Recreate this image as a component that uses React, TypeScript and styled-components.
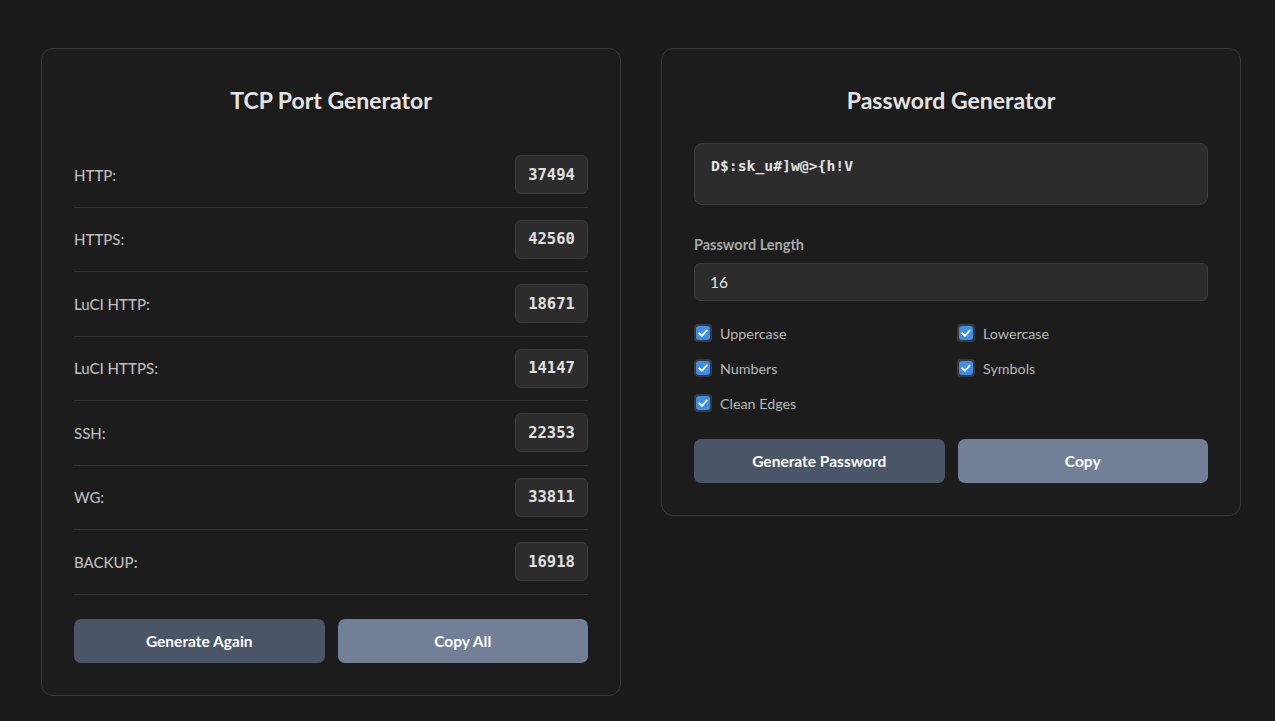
import React from "react";
import styled, { createGlobalStyle } from "styled-components";

const Global = createGlobalStyle`
  html, body { margin: 0; padding: 0; background: #1b1b1b; }
  body { font-family: "Lato", "Noto Sans", sans-serif; color: #ddd; }
  * { box-sizing: border-box; }
`;

const Page = styled.div`
  display: flex;
  align-items: flex-start;
  gap: 40px;
  padding: 48px 0 48px 41px;
`;

const Card = styled.section`
  flex: 0 0 580px;
  width: 580px;
  background: #1c1c1c;
  border: 1px solid #3a3a3a;
  border-radius: 12px;
  padding: 32px;
`;

const Title = styled.h2`
  margin: 0 0 24px;
  text-align: center;
  font-size: 23px;
  line-height: 38px;
  font-weight: 700;
  color: #e4e4e4;
`;

const PortRow = styled.div`
  display: flex;
  align-items: center;
  justify-content: space-between;
  padding: 12.25px 0;
  border-bottom: 1px solid #333;
`;

const PortLabel = styled.span`
  font-size: 15px;
  color: #bdbdbd;
  font-weight: 500;
`;

const PortValue = styled.span`
  display: inline-flex;
  align-items: center;
  justify-content: center;
  height: 39px;
  width: 73px;
  background: #2c2c2c;
  border: 1px solid #3c3c3c;
  border-radius: 6px;
  font-family: "DejaVu Sans Mono", "Liberation Mono", monospace;
  font-weight: 700;
  font-size: 15.5px;
  color: #e0e0e0;
`;

const ButtonRow = styled.div<{ $top: number }>`
  display: grid;
  grid-template-columns: 1fr 1fr;
  gap: 13px;
  margin-top: ${(p) => p.$top}px;
`;

const Button = styled.button<{ $light?: boolean }>`
  height: 44px;
  border: none;
  border-radius: 7px;
  background: ${(p) => (p.$light ? "#718096" : "#4a5568")};
  color: #ffffff;
  font-family: "Lato", "Noto Sans", sans-serif;
  font-size: 15.5px;
  font-weight: 700;
`;

const Output = styled.div`
  height: 62px;
  background: #2c2c2c;
  border: 1px solid #3c3c3c;
  border-radius: 8px;
  padding: 13px 16px;
  font-family: "DejaVu Sans Mono", "Liberation Mono", monospace;
  font-size: 14.75px;
  font-weight: 700;
  color: #e2e2e2;
  line-height: 18px;
`;

const FieldLabel = styled.label`
  display: block;
  margin: 30px 0 8px;
  font-size: 14.5px;
  line-height: 20px;
  font-weight: 700;
  color: #a8a8a8;
`;

const NumberInput = styled.div`
  height: 38px;
  display: flex;
  align-items: center;
  background: #2c2c2c;
  border: 1px solid #3c3c3c;
  border-radius: 6px;
  padding: 0 15px;
  font-size: 15.5px;
  color: #e6e6e6;
`;

const Options = styled.div`
  display: grid;
  grid-template-columns: 1fr 1fr;
  column-gap: 12px;
  row-gap: 15px;
  margin-top: 22px;
`;

const Option = styled.label`
  display: flex;
  align-items: center;
  gap: 8px;
  height: 20px;
  font-size: 14.3px;
  color: #b8b8b8;
`;

const Box = styled.span`
  width: 18px;
  height: 18px;
  border-radius: 4px;
  background: #3a3a3a;
  display: flex;
  align-items: center;
  justify-content: center;
`;

const Inner = styled.span`
  width: 14px;
  height: 14px;
  border-radius: 3px;
  background: #3b8eea;
  display: flex;
  align-items: center;
  justify-content: center;
`;

const Check = () => (
  <Box>
    <Inner>
      <svg width="12" height="12" viewBox="0 0 12 12">
        <path d="M2.2 6.3 L4.9 8.9 L9.8 3.4" fill="none" stroke="#fff" strokeWidth="1.9" strokeLinecap="round" strokeLinejoin="round" />
      </svg>
    </Inner>
  </Box>
);

const ports: [string, string][] = [
  ["HTTP:", "37494"],
  ["HTTPS:", "42560"],
  ["LuCI HTTP:", "18671"],
  ["LuCI HTTPS:", "14147"],
  ["SSH:", "22353"],
  ["WG:", "33811"],
  ["BACKUP:", "16918"],
];

const options = ["Uppercase", "Lowercase", "Numbers", "Symbols", "Clean Edges"];

export default function App() {
  return (
    <>
      <Global />
      <Page>
        <Card>
          <Title>TCP Port Generator</Title>
          {ports.map(([l, v]) => (
            <PortRow key={l}>
              <PortLabel>{l}</PortLabel>
              <PortValue>{v}</PortValue>
            </PortRow>
          ))}
          <ButtonRow $top={24}>
            <Button>Generate Again</Button>
            <Button $light>Copy All</Button>
          </ButtonRow>
        </Card>
        <Card>
          <Title>Password Generator</Title>
          <Output>{"D$:sk_u#]w@>{h!V"}</Output>
          <FieldLabel>Password Length</FieldLabel>
          <NumberInput>16</NumberInput>
          <Options>
            {options.map((o) => (
              <Option key={o}>
                <Check />
                {o}
              </Option>
            ))}
          </Options>
          <ButtonRow $top={26}>
            <Button>Generate Password</Button>
            <Button $light>Copy</Button>
          </ButtonRow>
        </Card>
      </Page>
    </>
  );
}
